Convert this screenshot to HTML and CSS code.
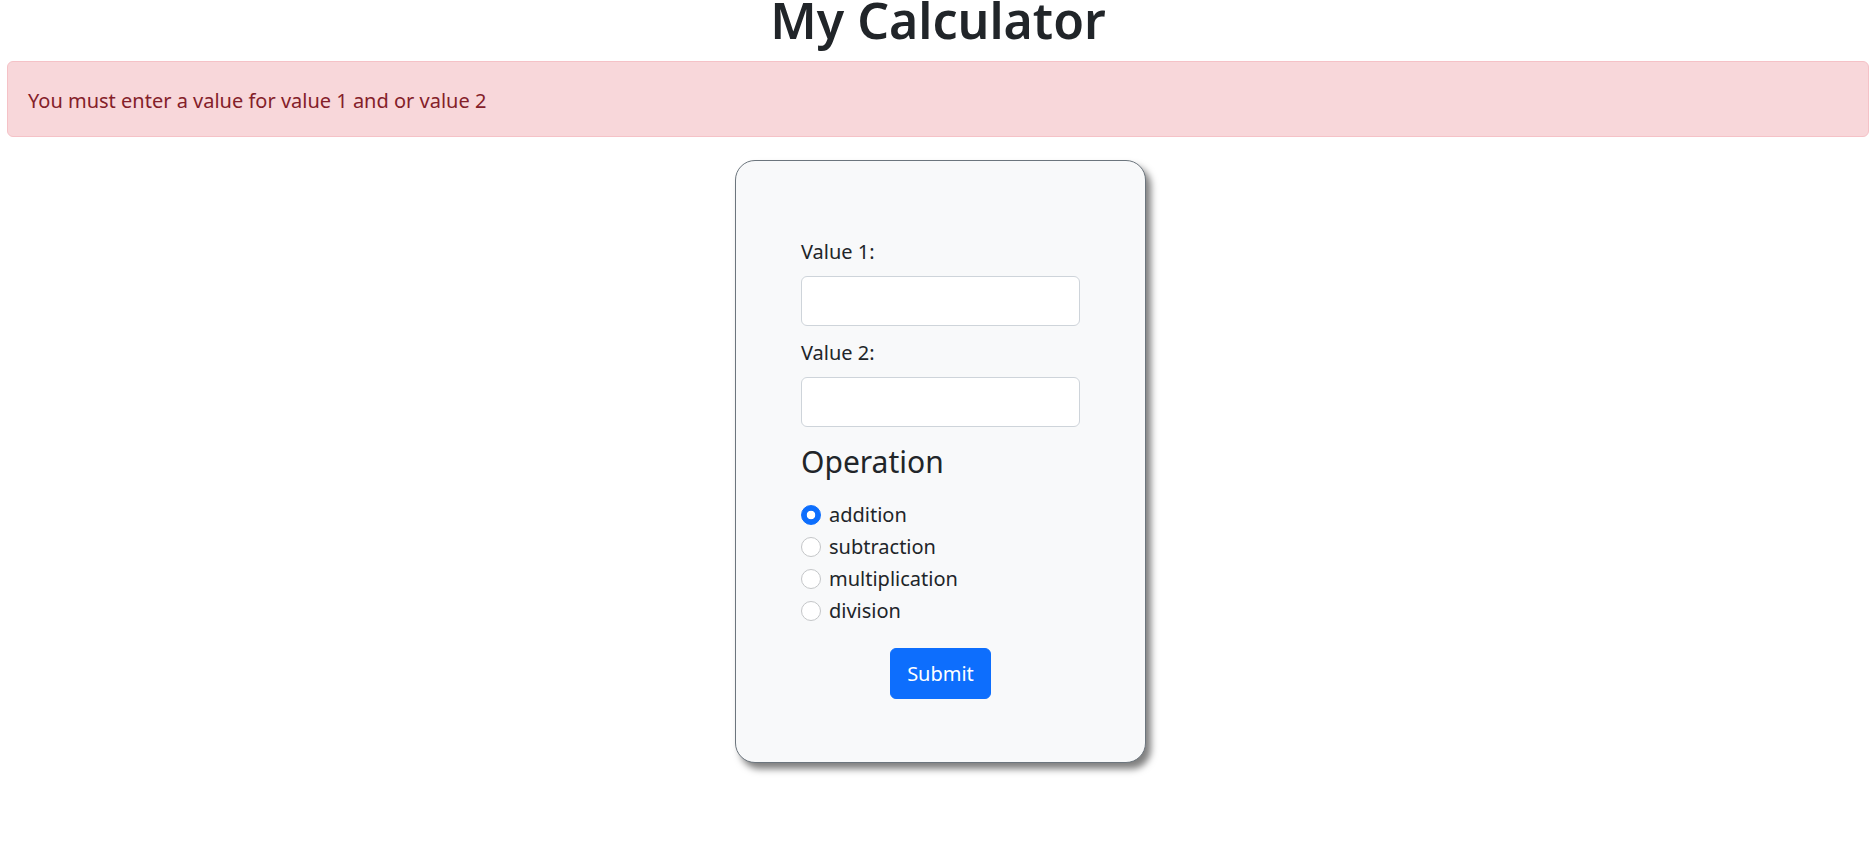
FILE: index.html
```html
<!DOCTYPE html>
<html lang="en">
<head>
<meta charset="utf-8">
<title>My Calculator</title>
<link rel="stylesheet" href="styles.css">
</head>
<body>
  <h1 class="title">My Calculator</h1>
  <div class="alert">You must enter a value for value 1 and or value 2</div>
  <div class="stage">
    <form class="card">
      <label class="field-label" for="v1">Value 1:</label>
      <input class="field-input" id="v1" type="text">
      <label class="field-label" for="v2">Value 2:</label>
      <input class="field-input" id="v2" type="text">
      <fieldset class="ops">
        <legend class="ops-title">Operation</legend>
        <label class="op"><input class="radio" type="radio" name="op" checked><span>addition</span></label>
        <label class="op"><input class="radio" type="radio" name="op"><span>subtraction</span></label>
        <label class="op"><input class="radio" type="radio" name="op"><span>multiplication</span></label>
        <label class="op"><input class="radio" type="radio" name="op"><span>division</span></label>
      </fieldset>
      <div class="actions"><button class="btn" type="button">Submit</button></div>
    </form>
  </div>
</body>
</html>
```

FILE: styles.css
```css
* { box-sizing: border-box; }

html, body {
  margin: 0;
  padding: 0;
  background: #ffffff;
}

body {
  font-family: "Noto Sans", "Open Sans", sans-serif;
  font-size: 20px;
  line-height: 30px;
  color: #212529;
}

.title {
  margin: 0 0 20px;
  text-align: center;
  font-size: 50px;
  line-height: 41px;
  font-weight: 600;
  color: #212529;
}

.alert {
  margin: 0 7px;
  padding: 24px 20px 20px;
  background: #f8d7da;
  border: 1px solid #f5c2c7;
  border-radius: 6px;
  color: #842029;
  font-size: 20px;
  line-height: 30px;
}

.stage {
  display: flex;
  justify-content: center;
  padding-left: 5px;
  padding-top: 23px;
  padding-bottom: 20px;
}

.card {
  width: 411px;
  height: 603px;
  padding: 76px 65px 0;
  background: #f8f9fa;
  border: 1px solid #6c757d;
  border-radius: 20px;
  box-shadow: 5px 6px 7px rgba(0, 0, 0, 0.5);
  display: flex;
  flex-direction: column;
}

.field-label {
  display: block;
  line-height: 30px;
  margin-bottom: 9px;
}

.field-input {
  display: block;
  width: 279px;
  height: 50px;
  margin: 0 0 12px;
  padding: 0 14px;
  border: 1px solid #ced4da;
  border-radius: 6px;
  background: #ffffff;
  font: inherit;
}

.ops {
  margin: 0;
  padding: 0;
  border: 0;
  min-width: 0;
}

.ops-title {
  padding: 0;
  margin: 5px 0 20px;
  font-size: 30px;
  line-height: 36px;
  font-weight: 400;
  float: left;
  width: 100%;
}

.op {
  clear: both;
  display: flex;
  align-items: center;
  height: 30px;
  margin-bottom: 2px;
}

.radio {
  appearance: none;
  -webkit-appearance: none;
  width: 20px;
  height: 20px;
  margin: 0 8px 0 0;
  border: 1px solid #c4c6c8;
  border-radius: 50%;
  background: #ffffff;
  flex: none;
}

.radio:checked {
  border-color: #0d6efd;
  background: radial-gradient(circle, #ffffff 0 4px, #0d6efd 4.6px);
}

.actions {
  display: flex;
  justify-content: center;
  margin-top: 20px;
}

.btn {
  height: 51px;
  width: 101px;
  padding: 0;
  border: 1px solid #0d6efd;
  border-radius: 6px;
  background: #0d6efd;
  color: #ffffff;
  font: inherit;
  font-size: 20px;
}
```
